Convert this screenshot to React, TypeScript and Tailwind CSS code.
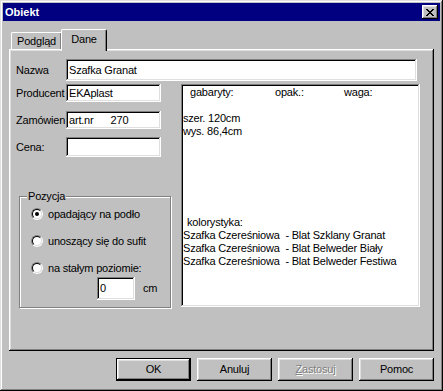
const raised = "shadow-[inset_-1px_-1px_#000,inset_1px_1px_#fff,inset_-2px_-2px_#808080,inset_2px_2px_#dfdfdf]";
const sunken = "shadow-[inset_-1px_-1px_#fff,inset_1px_1px_#808080,inset_-2px_-2px_#dfdfdf,inset_2px_2px_#000]";

function Field({ label, value, h, w = "w-[95px]", gap = "" }: { label: string; value: string; h: string; w?: string; gap?: string }) {
  return (
    <div className={`flex items-center ${h} ${gap}`}>
      <span className="w-[50px] whitespace-nowrap">{label}</span>
      <div className={`${w} h-full bg-white ${sunken} pl-[3px] flex items-center whitespace-pre`}>{value}</div>
    </div>
  );
}

function Radio({ checked, label, gap }: { checked?: boolean; label: string; gap: string }) {
  return (
    <div className={`flex items-center h-[14px] pl-[11px] ${gap}`}>
      <div className="w-[12px] h-[12px] rounded-full border border-t-[#808080] border-l-[#808080] border-b-white border-r-white">
        <div className="w-full h-full rounded-full border border-t-black border-l-black border-b-[#dfdfdf] border-r-[#dfdfdf] bg-white flex items-center justify-center">
          {checked && <div className="w-[4px] h-[4px] rounded-full bg-black" />}
        </div>
      </div>
      <span className="ml-[5px] whitespace-nowrap">{label}</span>
    </div>
  );
}

function Button({ children, def, disabled }: { children: React.ReactNode; def?: boolean; disabled?: boolean }) {
  return (
    <div className={`w-[75px] h-[23px] ${def ? "border border-black" : ""}`}>
      <div
        className={`w-full h-full flex items-center justify-center ${raised} ${
          disabled ? "text-[#808080] [text-shadow:1px_1px_0_#fff]" : ""
        }`}
      >
        {children}
      </div>
    </div>
  );
}

function CloseIcon() {
  const px = [
    "11....11",
    ".11..11.",
    "..1111..",
    "...11...",
    "..1111..",
    ".11..11.",
    "11....11",
  ];
  return (
    <svg width="8" height="7" viewBox="0 0 8 7" shapeRendering="crispEdges">
      {px.flatMap((row, y) =>
        row.split("").map((c, x) => (c === "1" ? <rect key={`${x}-${y}`} x={x} y={y} width="1" height="1" fill="#000" /> : null))
      )}
    </svg>
  );
}

export default function App() {
  return (
    <div className="w-[443px] h-[391px] p-[3px] bg-[#c0c0c0] shadow-[inset_-1px_-1px_#000,inset_1px_1px_#dfdfdf,inset_-2px_-2px_#808080,inset_2px_2px_#fff] flex flex-col text-[11px] leading-[13px] text-black font-['Liberation_Sans',Arial,sans-serif] tracking-[-0.2px]">
      {/* title bar */}
      <div className="h-[18px] bg-[#000080] flex items-center justify-between px-[2px]">
        <span className="text-white font-bold tracking-normal">Obiekt</span>
        <div className={`w-[16px] h-[14px] bg-[#c0c0c0] ${raised} flex items-center justify-center`}>
          <CloseIcon />
        </div>
      </div>

      {/* tabs */}
      <div className="mt-[8px] h-[20px] flex items-end pl-[8px]">
        <div className="w-[50px] h-[17px] border-t border-l border-white rounded-tl-[2px] shadow-[inset_-1px_0_#808080] flex items-center justify-center pt-[1px]">
          Podgląd
        </div>
        <div className="relative z-10 w-[46px] h-[22px] -mb-[2px] bg-[#c0c0c0] border-t border-l border-r border-white border-r-black rounded-t-[2px] shadow-[inset_-1px_0_#808080] flex justify-center pt-[3px]">
          Dane
        </div>
      </div>

      {/* tab page */}
      <div className="mx-[6px] h-[302px] shadow-[inset_-1px_-1px_#000,inset_1px_1px_#fff,inset_-2px_-2px_#808080,inset_2px_2px_#dfdfdf] pt-[10px] pl-[7px]">
        <Field label="Nazwa" value="Szafka Granat" h="h-[22px]" w="w-[351px]" />
        <div className="flex mt-[3px]">
          <div className="w-[154px] flex flex-col">
            <Field label="Producent" value="EKAplast" h="h-[18px]" />
            <Field label="Zamówien" value="art.nr      270" h="h-[18px]" gap="mt-[9px]" />
            <Field label="Cena:" value="" h="h-[20px]" gap="mt-[8px]" />
            <fieldset className="mt-[33px] ml-[3px] w-[152px] border border-[#808080] shadow-[inset_1px_1px_#fff,1px_1px_#fff] pb-[7px]">
              <legend className="ml-[7px] px-[1px] bg-[#c0c0c0]">Pozycja</legend>
              <Radio checked label="opadający na podło" gap="mt-[4px]" />
              <Radio label="unoszący się do sufit" gap="mt-[13px]" />
              <Radio label="na stałym poziomie:" gap="mt-[13px]" />
              <div className="flex items-center mt-[2px] pl-[77px]">
                <div className={`w-[38px] h-[23px] bg-white ${sunken} pl-[3px] flex items-center`}>0</div>
                <span className="ml-[8px]">cm</span>
              </div>
            </fieldset>
          </div>
          <div className={`ml-[11px] w-[239px] h-[223px] bg-white ${sunken} pt-[2px] pl-[2px] whitespace-pre`}>
            <div className="flex pl-[7px]">
              <span className="w-[85px]">gabaryty:</span>
              <span className="w-[69px]">opak.:</span>
              <span>waga:</span>
            </div>
            <div>&nbsp;</div>
            <div>szer. 120cm</div>
            <div>wys. 86,4cm</div>
            <div className="h-[78px]" />
            <div className="pl-[4px]">kolorystyka:</div>
            <div>Szafka Czereśniowa  - Blat Szklany Granat</div>
            <div>Szafka Czereśniowa  - Blat Belweder Biały</div>
            <div>Szafka Czereśniowa  - Blat Belweder Festiwa</div>
          </div>
        </div>
      </div>

      {/* buttons */}
      <div className="mt-[7px] flex justify-end gap-[6px] pr-[6px]">
        <Button def>OK</Button>
        <Button>Anuluj</Button>
        <Button disabled>
          <span>
            <span className="underline">Z</span>astosuj
          </span>
        </Button>
        <Button>Pomoc</Button>
      </div>
    </div>
  );
}
